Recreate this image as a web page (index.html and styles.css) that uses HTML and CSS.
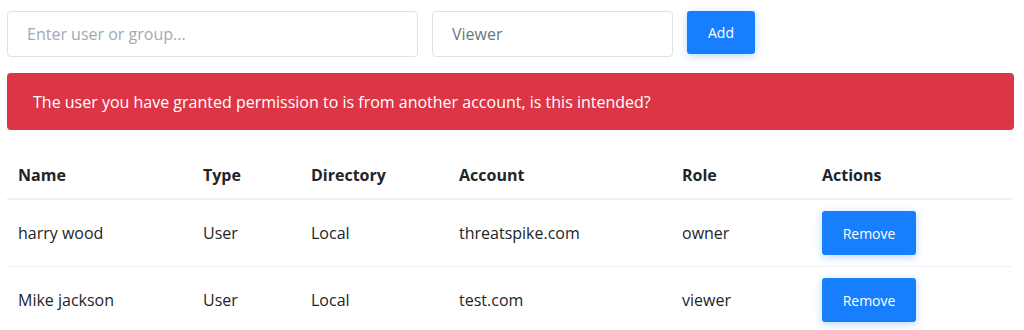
FILE: index.html
```html
<!DOCTYPE html>
<html lang="en">
<head>
    <meta charset="UTF-8">
    <meta name="viewport" content="width=device-width, initial-scale=1.0">
    <title>Permissions</title>
    <link rel="stylesheet" href="styles.css">
</head>
<body>
    <div class="add-row">
        <input class="field field-user" type="text" placeholder="Enter user or group...">
        <input class="field field-role" type="text" value="Viewer">
        <button class="btn btn-add">Add</button>
    </div>

    <div class="alert">The user you have granted permission to is from another account, is this intended?</div>

    <table class="perm-table">
        <thead>
            <tr>
                <th class="col-name">Name</th>
                <th class="col-type">Type</th>
                <th class="col-dir">Directory</th>
                <th class="col-account">Account</th>
                <th class="col-role">Role</th>
                <th>Actions</th>
            </tr>
        </thead>
        <tbody>
            <tr>
                <td>harry wood</td>
                <td>User</td>
                <td>Local</td>
                <td>threatspike.com</td>
                <td>owner</td>
                <td><button class="btn btn-remove">Remove</button></td>
            </tr>
            <tr>
                <td>Mike jackson</td>
                <td>User</td>
                <td>Local</td>
                <td>test.com</td>
                <td>viewer</td>
                <td><button class="btn btn-remove">Remove</button></td>
            </tr>
        </tbody>
    </table>
</body>
</html>
```

FILE: styles.css
```css
body {
    margin: 0;
    padding: 11px 10px 0 7px;
    font-family: "Open Sans", Arial, sans-serif;
    color: #212529;
    background-color: #fff;
}
.add-row {
    display: flex;
    gap: 14px;
    align-items: flex-start;
}
.field {
    box-sizing: border-box;
    height: 46px;
    padding: 0 19px;
    border: 1px solid #dfe2e7;
    border-radius: 4px;
    font-family: inherit;
    font-size: 16px;
    color: #6c757d;
    outline: none;
}
.field::placeholder {
    color: #a3a9b2;
}
.field-user {
    width: 411px;
}
.field-role {
    width: 241px;
}
.btn {
    border: none;
    border-radius: 3px;
    background-color: #177ffd;
    color: #fff;
    font-family: inherit;
    font-size: 14px;
    font-weight: 500;
    cursor: pointer;
    box-shadow: 0 2px 8px rgba(23, 127, 253, 0.3);
}
.btn-add {
    width: 68px;
    height: 43px;
}
.alert {
    margin-top: 16px;
    box-sizing: border-box;
    height: 57px;
    padding: 0 26px;
    display: flex;
    align-items: center;
    background-color: #dc3545;
    color: #fff;
    border-radius: 4px;
    font-size: 16px;
}
.perm-table {
    margin-top: 20px;
    width: 1005px;
    border-collapse: collapse;
    font-size: 16px;
}
.perm-table th,
.perm-table td {
    text-align: left;
    padding: 11px;
    line-height: 24px;
}
.perm-table th {
    font-weight: 700;
    padding-top: 13px;
    border-bottom: 2px solid #eef0f3;
}
.perm-table td {
    border-bottom: 1px solid #eef0f3;
}
.perm-table tbody tr:last-child td {
    border-bottom: none;
}
.col-name { width: 163px; }
.col-type { width: 86px; }
.col-dir { width: 126px; }
.col-account { width: 201px; }
.col-role { width: 118px; }
.btn-remove {
    width: 94px;
    height: 44px;
    display: block;
}
```
